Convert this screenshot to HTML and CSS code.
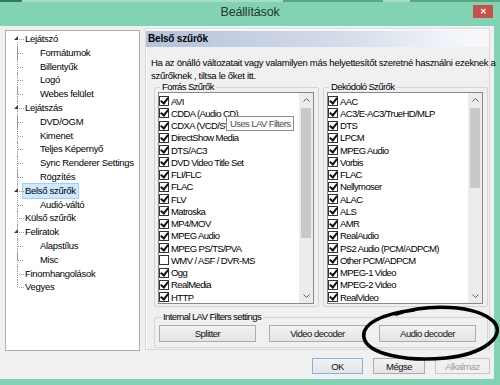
FILE: index.html
```html
<!DOCTYPE html>
<html lang="hu">
<head>
    <meta charset="UTF-8">
    <meta name="viewport" content="width=device-width, initial-scale=1.0">
    <title>Beállítások</title>
    <link rel="stylesheet" href="styles.css">
</head>
<body>
    <div class="window">
        <div class="top-strip"></div>
        <div class="titlebar">
            <span></span>
            <span class="title">Beállítások</span>
            <button class="close-btn">✕</button>
        </div>

        <div class="client">
            <div class="main">
                <div class="tree">
                    <ul class="root">
                        <li class="first"><span class="toggle"></span><span class="label">Lejátszó</span>
                            <ul>
                                <li><span class="label">Formátumok</span></li>
                                <li><span class="label">Billentyűk</span></li>
                                <li><span class="label">Logó</span></li>
                                <li class="last"><span class="label">Webes felület</span></li>
                            </ul>
                        </li>
                        <li><span class="toggle"></span><span class="label">Lejátszás</span>
                            <ul>
                                <li><span class="label">DVD/OGM</span></li>
                                <li><span class="label">Kimenet</span></li>
                                <li><span class="label">Teljes Képernyő</span></li>
                                <li><span class="label">Sync Renderer Settings</span></li>
                                <li class="last"><span class="label">Rögzítés</span></li>
                            </ul>
                        </li>
                        <li><span class="toggle"></span><span class="label selected">Belső szűrők</span>
                            <ul>
                                <li class="last"><span class="label">Audió-váltó</span></li>
                            </ul>
                        </li>
                        <li><span class="label">Külső szűrők</span></li>
                        <li><span class="toggle"></span><span class="label">Feliratok</span>
                            <ul>
                                <li><span class="label">Alapstílus</span></li>
                                <li class="last"><span class="label">Misc</span></li>
                            </ul>
                        </li>
                        <li><span class="label">Finomhangolások</span></li>
                        <li class="last"><span class="label">Vegyes</span></li>
                    </ul>
                </div>

                <div class="page">
                    <div class="page-header">Belső szűrők</div>
                    <p class="desc">Ha az önálló változatait vagy valamilyen más helyettesítőt szeretné használni ezeknek a<br>szűrőknek , tiltsa le őket itt.</p>

                    <div class="groups">
                        <fieldset class="group">
                            <legend>Forrás Szűrők</legend>
                            <div class="listbox">
                                <div class="items">
                                    <div class="item"><span class="cb on"></span>AVI</div>
                                    <div class="item"><span class="cb on"></span>CDDA (Audio CD)</div>
                                    <div class="item"><span class="cb on"></span>CDXA (VCD/SVCD/XCD)</div>
                                    <div class="item"><span class="cb on"></span>DirectShow Media</div>
                                    <div class="item"><span class="cb on"></span>DTS/AC3</div>
                                    <div class="item"><span class="cb on"></span>DVD Video Title Set</div>
                                    <div class="item"><span class="cb on"></span>FLI/FLC</div>
                                    <div class="item"><span class="cb on"></span>FLAC</div>
                                    <div class="item"><span class="cb on"></span>FLV</div>
                                    <div class="item"><span class="cb on"></span>Matroska</div>
                                    <div class="item"><span class="cb on"></span>MP4/MOV</div>
                                    <div class="item"><span class="cb on"></span>MPEG Audio</div>
                                    <div class="item"><span class="cb on"></span>MPEG PS/TS/PVA</div>
                                    <div class="item"><span class="cb"></span>WMV / ASF / DVR-MS</div>
                                    <div class="item"><span class="cb on"></span>Ogg</div>
                                    <div class="item"><span class="cb on"></span>RealMedia</div>
                                    <div class="item"><span class="cb on"></span>HTTP</div>
                                </div>
                                <div class="scrollbar">
                                    <div class="arrow"><svg width="7" height="4" viewBox="0 0 7 4"><polyline points="0.5,3.5 3.5,0.5 6.5,3.5" fill="none" stroke="#606060"/></svg></div>
                                    <div class="track"><div class="thumb thumb-long"></div></div>
                                    <div class="arrow"><svg width="7" height="4" viewBox="0 0 7 4"><polyline points="0.5,0.5 3.5,3.5 6.5,0.5" fill="none" stroke="#606060"/></svg></div>
                                </div>
                            </div>
                        </fieldset>

                        <fieldset class="group">
                            <legend>Dekódoló Szűrők</legend>
                            <div class="listbox">
                                <div class="items">
                                    <div class="item"><span class="cb on"></span>AAC</div>
                                    <div class="item"><span class="cb on"></span>AC3/E-AC3/TrueHD/MLP</div>
                                    <div class="item"><span class="cb on"></span>DTS</div>
                                    <div class="item"><span class="cb on"></span>LPCM</div>
                                    <div class="item"><span class="cb on"></span>MPEG Audio</div>
                                    <div class="item"><span class="cb on"></span>Vorbis</div>
                                    <div class="item"><span class="cb on"></span>FLAC</div>
                                    <div class="item"><span class="cb on"></span>Nellymoser</div>
                                    <div class="item"><span class="cb on"></span>ALAC</div>
                                    <div class="item"><span class="cb on"></span>ALS</div>
                                    <div class="item"><span class="cb on"></span>AMR</div>
                                    <div class="item"><span class="cb on"></span>RealAudio</div>
                                    <div class="item"><span class="cb on"></span>PS2 Audio (PCM/ADPCM)</div>
                                    <div class="item"><span class="cb on"></span>Other PCM/ADPCM</div>
                                    <div class="item"><span class="cb on"></span>MPEG-1 Video</div>
                                    <div class="item"><span class="cb on"></span>MPEG-2 Video</div>
                                    <div class="item"><span class="cb on"></span>RealVideo</div>
                                </div>
                                <div class="scrollbar">
                                    <div class="arrow"><svg width="7" height="4" viewBox="0 0 7 4"><polyline points="0.5,3.5 3.5,0.5 6.5,3.5" fill="none" stroke="#606060"/></svg></div>
                                    <div class="track"><div class="thumb thumb-short"></div></div>
                                    <div class="arrow"><svg width="7" height="4" viewBox="0 0 7 4"><polyline points="0.5,0.5 3.5,3.5 6.5,0.5" fill="none" stroke="#606060"/></svg></div>
                                </div>
                            </div>
                        </fieldset>
                    </div>

                    <fieldset class="lav">
                        <legend>Internal LAV Filters settings</legend>
                        <div class="lav-buttons">
                            <button class="btn">Splitter</button>
                            <button class="btn">Video decoder</button>
                            <button class="btn">Audio decoder</button>
                        </div>
                    </fieldset>
                </div>
            </div>

            <div class="footer">
                <button class="btn btn-ok">OK</button>
                <button class="btn btn-cancel">Mégse</button>
                <button class="btn btn-apply" disabled>Alkalmaz</button>
            </div>
        </div>

        <div class="tooltip">Uses LAV Filters</div>

        <!-- kézzel rajzolt kiemelés -->
        <svg class="oval" width="150" height="70" viewBox="0 0 150 70">
            <path d="M40 12 C70 2 120 2 138 20 C150 34 128 52 90 56 C50 60 12 52 8 36 C5 22 25 12 58 8" fill="none" stroke="#000" stroke-width="3.5" stroke-linecap="round"/>
        </svg>
    </div>
</body>
</html>
```

FILE: styles.css
```css
* {
    box-sizing: border-box;
}
body {
    margin: 0;
    font-family: "Liberation Sans", Arial, sans-serif;
    font-size: 9.5px;
    letter-spacing: -0.6px;
    color: #000;
}
.window {
    width: 500px;
    height: 385px;
    background: #82d3b4;
    position: relative;
    overflow: hidden;
    display: flex;
    flex-direction: column;
}
.top-strip {
    height: 2px;
    background: linear-gradient(to right, #2f7c57 0 22px, #a7dcc6 22px 283px, #5aa582 283px 383px, #a7dcc6 383px 410px, #5aa582 410px);
}
.titlebar {
    height: 24px;
    display: grid;
    grid-template-columns: 1fr auto 1fr;
    align-items: start;
}
.title {
    font-size: 12.5px;
    letter-spacing: -0.2px;
    line-height: 16px;
    padding-top: 2px;
    color: #26332e;
}
.close-btn {
    justify-self: end;
    margin: 3px 7px 0 0;
    width: 20px;
    height: 13px;
    padding: 0;
    border: none;
    background: #c9504b;
    color: white;
    font-size: 8px;
    font-weight: bold;
    line-height: 13px;
}
.client {
    flex: 1;
    margin: 0 6px 6px 0;
    background: #f0f0f0;
}
.main {
    display: flex;
    gap: 5px;
    height: 325px;
    padding: 2px 4px 0 5px;
}

/* tree */
.tree {
    width: 135px;
    height: 321px;
    margin-top: 2px;
    background: white;
    border: 1px solid #adadad;
    font-size: 9.5px;
    letter-spacing: -0.3px;
}
.tree ul {
    list-style: none;
    margin: 0;
    padding: 0;
}
.tree .root {
    padding-top: 1px;
}
.tree li {
    position: relative;
}
.root > li {
    padding-left: 19px;
}
.root ul > li {
    padding-left: 15px;
}
.tree .label {
    display: inline-block;
    height: 13.8px;
    line-height: 13.8px;
    white-space: nowrap;
}
.tree .label.selected {
    background: #cde8ff;
    outline: 1px solid #99d1ff;
    padding: 0 2px;
    margin-left: -2px;
}
.tree li::before {
    content: "";
    position: absolute;
    top: 0;
    bottom: 0;
    border-left: 1px dotted #9a9a9a;
}
.tree li::after {
    content: "";
    position: absolute;
    top: 7px;
    width: 5px;
    border-top: 1px dotted #9a9a9a;
}
.root > li::before {
    left: 11px;
}
.root > li::after {
    left: 13px;
}
.root > li.first::before {
    top: 10px;
}
.root ul > li::before {
    left: -8px;
}
.root ul > li::after {
    left: -7px;
}
.tree li.last::before {
    bottom: auto;
    height: 7px;
}
.toggle {
    position: absolute;
    left: 8px;
    top: 4px;
    width: 0;
    height: 0;
    border-top: 4px solid transparent;
    border-right: 4px solid #3a3a3a;
    z-index: 1;
}

/* page */
.page {
    width: 345px;
    height: 322px;
    border: 1px solid #d9d9d9;
    box-shadow: inset 1px 1px #ffffff;
    padding-top: 2px;
    display: flex;
    flex-direction: column;
}
.page-header {
    height: 16px;
    line-height: 16px;
    padding-left: 2px;
    font-size: 10px;
    letter-spacing: -0.2px;
    font-weight: bold;
    background: linear-gradient(to right, #b3c2db, #d3dbe9 55%, #f6f8fb 95%);
}
.desc {
    margin: 9px 0 0 5px;
    letter-spacing: -0.3px;
    line-height: 13px;
    white-space: nowrap;
}
.groups {
    display: flex;
    gap: 4px;
    padding-left: 8px;
}
fieldset {
    margin: 0;
    border: 1px solid #d5d5d5;
    border-radius: 2px;
}
legend {
    padding: 0 2px;
    margin-left: 2px;
    line-height: 10px;
}
.group {
    width: 165px;
    padding: 0 4px 2px 3px;
}
.listbox {
    height: 212px;
    border: 1px solid #848891;
    background: white;
    display: flex;
}
.items {
    flex: 1;
    padding-top: 2px;
    overflow: hidden;
}
.item {
    display: flex;
    align-items: center;
    gap: 2px;
    height: 12.25px;
    white-space: nowrap;
}
.cb {
    flex: none;
    width: 10px;
    height: 10px;
    border: 1px solid #333;
    background: white;
    position: relative;
}
.cb.on::after {
    content: "";
    position: absolute;
    left: 2px;
    top: -1px;
    width: 3px;
    height: 6px;
    border: solid #111;
    border-width: 0 2px 2px 0;
    transform: rotate(38deg);
}
.scrollbar {
    width: 14px;
    background: #ececec;
    display: flex;
    flex-direction: column;
}
.arrow {
    height: 14px;
    display: flex;
    align-items: center;
    justify-content: center;
}
.track {
    flex: 1;
}
.thumb {
    margin: 1px 2px 0;
    background: #c9c9c9;
}
.thumb-long {
    height: 130px;
}
.thumb-short {
    height: 80px;
}
.lav {
    margin: 5px 1px 0 8px;
    padding: 3px 4px 5px 4px;
}
.lav-buttons {
    display: flex;
    gap: 13px;
}
.btn {
    height: 17px;
    padding: 0;
    font-family: inherit;
    font-size: 9.5px;
    letter-spacing: -0.5px;
    color: #111;
    background: linear-gradient(#f2f2f2, #e4e4e4);
    border: 1px solid #acacac;
}
.lav-buttons .btn {
    width: 97px;
}
.footer {
    display: flex;
    justify-content: flex-end;
    gap: 10px;
    padding: 7px 4px 0 0;
}
.footer .btn {
    height: 16px;
}
.btn-ok {
    width: 51px;
    border-color: #7eb4ea;
}
.btn-cancel {
    width: 52px;
}
.btn-apply {
    width: 55px;
    color: #a0a0a0;
    border-color: #c8c8c8;
    background: #f0f0f0;
}
.tooltip {
    position: absolute;
    left: 226px;
    top: 116px;
    height: 15px;
    padding: 0 3px;
    line-height: 13px;
    color: #505050;
    background: #fbfbfb;
    border: 1px solid #8c8c8c;
    white-space: nowrap;
}
.oval {
    position: absolute;
    left: 356px;
    top: 302px;
}
```
